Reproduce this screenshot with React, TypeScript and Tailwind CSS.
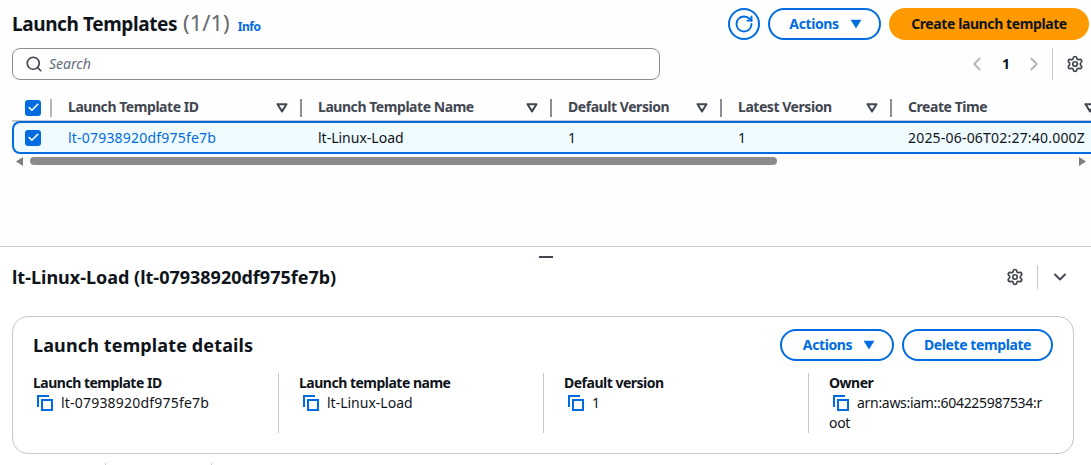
import React from 'react';
import { Search, ChevronLeft, ChevronRight, ChevronDown, RotateCw, Settings, Check } from 'lucide-react';

const Caret = ({ className }: { className: string }) => (
    <svg width="14" height="10" viewBox="0 0 14 10" className={className}>
        <path d="M2 1h10L7 9z" fill="currentColor" stroke="currentColor" strokeWidth="0.5" strokeLinejoin="round" />
    </svg>
);

const FilterCaret = () => (
    <svg width="12" height="10" viewBox="0 0 12 10" className="text-[#424650] shrink-0">
        <path d="M1.5 1.2h9L6 8.4z" fill="none" stroke="currentColor" strokeWidth="2" strokeLinejoin="round" />
    </svg>
);

const Copy = () => (
    <svg width="16" height="16" viewBox="0 0 16 16" className="text-[#006ce0] shrink-0" fill="none" stroke="currentColor" strokeWidth="2">
        <path d="M1 12V1h11" />
        <rect x="5" y="5" width="10" height="10" />
    </svg>
);

const Box = () => (
    <span className="w-4 h-4 rounded-[3px] bg-[#006ce0] flex items-center justify-center">
        <Check size={13} strokeWidth={3} className="text-white" />
    </span>
);

const Pill = ({ children, className = '' }: { children: React.ReactNode; className?: string }) => (
    <button className={`h-[32px] rounded-full border-2 border-[#006ce0] bg-white text-[#006ce0] text-[14px] font-bold tracking-[-0.4px] flex items-center justify-center ${className}`}>
        {children}
    </button>
);

const columns = [
    { name: 'Launch Template ID', w: 'w-[250px]', value: 'lt-07938920df975fe7b', link: true },
    { name: 'Launch Template Name', w: 'w-[250px]', value: 'lt-Linux-Load' },
    { name: 'Default Version', w: 'w-[170px]', value: '1' },
    { name: 'Latest Version', w: 'w-[170px]', value: '1' },
];

const details = [
    { label: 'Launch template ID', value: 'lt-07938920df975fe7b', w: 'w-[246px]', track: 'tracking-[0.2px]' },
    { label: 'Launch template name', value: 'lt-Linux-Load', w: 'w-[265px] pl-[20px]', track: '' },
    { label: 'Default version', value: '1', w: 'w-[265px] pl-[20px]', track: '' },
];

export default function App() {
    return (
        <div className="w-[1091px] h-[465px] overflow-hidden bg-white text-[#0f141a] text-[14px] leading-[20px] font-['Noto_Sans',sans-serif]">
            {/* Top table section */}
            <div className="h-[247px] bg-[#fefefe] border-b border-[#c6c6cd] overflow-hidden">
                <div className="h-[48px] pl-3 pr-[2px] pt-2 flex">
                    <div className="flex items-baseline h-[28px]">
                        <h1 className="text-[19px] leading-[28px] font-bold tracking-[-0.4px]">Launch Templates</h1>
                        <span className="text-[22px] leading-[28px] text-[#656871] ml-[6px]">(1/1)</span>
                        <span className="text-[12px] font-bold tracking-[-0.4px] text-[#006ce0] ml-[8px]">Info</span>
                    </div>
                    <div className="ml-auto flex gap-2">
                        <button className="w-[32px] h-[32px] rounded-full border-2 border-[#006ce0] flex items-center justify-center text-[#006ce0]">
                            <RotateCw size={20} strokeWidth={2.25} />
                        </button>
                        <Pill className="w-[113px] gap-[10px] pl-[3px]">
                            Actions <Caret className="text-[#006ce0]" />
                        </Pill>
                        <button className="w-[200px] h-[32px] rounded-full bg-[#ff9900] text-[14px] font-bold tracking-[-0.4px]">
                            Create launch template
                        </button>
                    </div>
                </div>

                <div className="h-[32px] pl-3 flex items-center">
                    <div className="w-[648px] h-[32px] rounded-[8px] border border-[#8c8c94] bg-white flex items-center pl-3 gap-[6px] text-[#5f6b7a]">
                        <Search size={18} strokeWidth={2.25} className="text-[#424650]" />
                        <span className="italic text-[14px]">Search</span>
                    </div>
                    <div className="ml-auto flex items-center h-[32px]">
                        <ChevronLeft size={22} strokeWidth={2} className="text-[#b4b4bb]" />
                        <span className="text-[14px] font-bold ml-[14px] mr-[13px]">1</span>
                        <ChevronRight size={22} strokeWidth={2} className="text-[#b4b4bb]" />
                        <span className="w-px h-[32px] bg-[#c6c6cd] ml-[7px] mr-[13px]" />
                        <Settings size={18} strokeWidth={2.25} className="text-[#424650] mr-[7px]" />
                    </div>
                </div>

                {/* Table */}
                <div className="mt-[15px] ml-3 w-[1079px] overflow-hidden">
                    <div className="w-[1200px]">
                        <div className="flex h-[27px] items-center border-b-2 border-[#c6c6cd]">
                            <div className="w-[40px] pl-[13px] flex items-center h-[18px] border-r-2 border-[#b4b4bb]">
                                <Box />
                            </div>
                            {columns.map((col) => (
                                <div key={col.name} className={`${col.w} h-[18px] pl-[16px] pr-[12px] flex items-center justify-between border-r-2 border-[#8c8c94] text-[#424650] font-bold text-[14px] tracking-[-0.45px]`}>
                                    <span className="-mt-[2px]">{col.name}</span>
                                    <FilterCaret />
                                </div>
                            ))}
                            <div className="w-[216px] h-[18px] pl-[16px] pr-[12px] flex items-center justify-between text-[#424650] font-bold text-[14px] tracking-[-0.45px]">
                                <span className="-mt-[2px]">Create Time</span>
                                <FilterCaret />
                            </div>
                        </div>
                        <div className="flex h-[33px] -mt-px items-center bg-[#f0fbff] border-2 border-r-0 border-[#006ce0] rounded-l-[8px]">
                            <div className="w-[38px] pl-[11px]">
                                <Box />
                            </div>
                            {columns.map((col) => (
                                <div key={col.name} className={`${col.w} pl-[16px] ${col.link ? 'text-[#006ce0] tracking-[0.2px]' : ''}`}>
                                    {col.value}
                                </div>
                            ))}
                            <div className="pl-[16px] tracking-[0.2px]">2025-06-06T02:27:40.000Z</div>
                        </div>
                    </div>
                </div>

                {/* Scrollbar */}
                <div className="mt-[2px] ml-[16px] w-[1070px] h-[10px] flex items-center">
                    <svg width="8" height="9" viewBox="0 0 8 9" className="text-[#7f7f7f] shrink-0"><path d="M7 0v9L0 4.5z" fill="currentColor" /></svg>
                    <div className="ml-[6px] w-[747px] h-[8px] rounded-full bg-[#8c8c8c]" />
                    <svg width="8" height="9" viewBox="0 0 8 9" className="ml-auto text-[#7f7f7f] shrink-0"><path d="M1 0v9l7-4.5z" fill="currentColor" /></svg>
                </div>
            </div>

            {/* Split handle */}
            <div className="h-[20px] flex justify-center pt-[9px]">
                <span className="w-[14px] h-[2px] bg-[#424650]" />
            </div>

            <div className="h-[20px] pl-3 pr-[21px] flex items-center">
                <h2 className="text-[18px] font-bold">lt-Linux-Load (lt-07938920df975fe7b)</h2>
                <Settings size={18} strokeWidth={2.25} className="ml-auto text-[#424650]" />
                <span className="w-px h-[24px] bg-[#c6c6cd] ml-[13px] mr-[12px]" />
                <ChevronDown size={20} strokeWidth={2.25} className="text-[#424650]" />
            </div>

            {/* Details card */}
            <div className="mt-[29px] ml-3 w-[1062px] h-[138px] rounded-[16px] border border-[#c6c6cd] bg-white pl-[20px] pr-[20px] pt-[12px]">
                <div className="flex items-center h-[32px]">
                    <h3 className="text-[18px] font-bold tracking-[0.13px]">Launch template details</h3>
                    <div className="ml-auto flex gap-2">
                        <Pill className="w-[114px] gap-[10px] pl-[5px]">
                            Actions <Caret className="text-[#006ce0]" />
                        </Pill>
                        <Pill className="w-[151px]">Delete template</Pill>
                    </div>
                </div>
                <div className="flex mt-[12px] h-[60px]">
                    {details.map((d) => (
                        <div key={d.label} className={`${d.w} border-r border-[#c6c6cd]`}>
                            <div className="font-bold tracking-[-0.5px]">{d.label}</div>
                            <div className="flex items-center gap-[8px] pl-[4px] h-[20px]">
                                <Copy />
                                <span className={d.track}>{d.value}</span>
                            </div>
                        </div>
                    ))}
                    <div className="pl-[20px] w-[240px]">
                        <div className="font-bold tracking-[-0.5px]">Owner</div>
                        <div className="break-all tracking-[-0.3px]">
                            <span className="inline-block align-[-3px] ml-[4px] mr-[8px]"><Copy /></span>
                            arn:aws:iam::604225987534:root
                        </div>
                    </div>
                </div>
            </div>

            {/* Next section's column ticks, cut off by the window */}
            <div className="mt-[9px] flex pl-[105px] gap-[105px]">
                <span className="w-px h-[3px] bg-[#c6c6cd]" />
                <span className="w-px h-[3px] bg-[#c6c6cd]" />
            </div>
        </div>
    );
}
